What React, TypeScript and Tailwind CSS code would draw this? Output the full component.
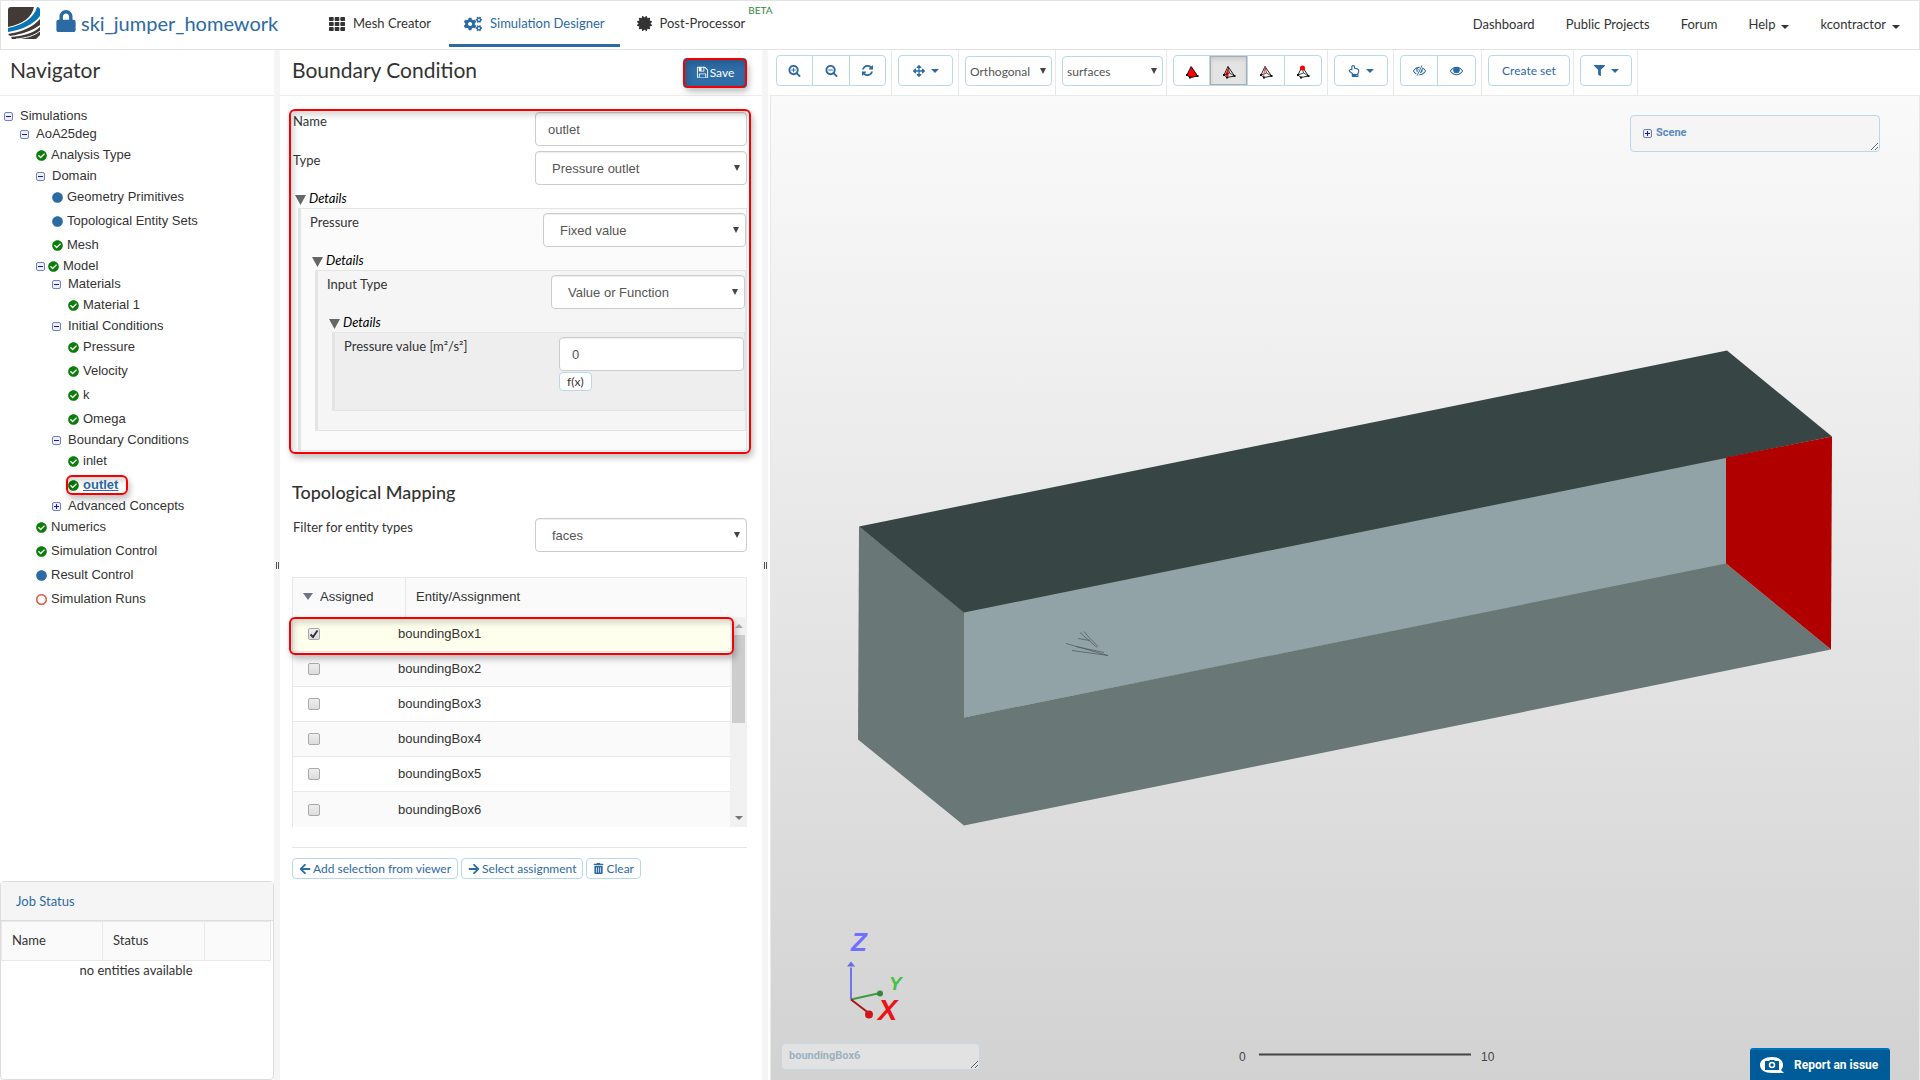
import { useState } from 'react';
import type { ReactNode } from 'react';
import clsx from 'clsx';
import {
  FaArrowLeft,
  FaArrowRight,
  FaArrowsAlt,
  FaCertificate,
  FaCheckCircle,
  FaCircle,
  FaCogs,
  FaFilter,
  FaLock,
  FaRegCircle,
  FaRegHandPointUp,
  FaTh,
  FaTrashAlt,
} from 'react-icons/fa';

type Status = 'ok' | 'info' | 'open';

interface TreeNode {
  label: string;
  level: number;
  toggle?: 'minus' | 'plus';
  status?: Status;
  selected?: boolean;
}

const TREE: TreeNode[] = [
  { label: 'Simulations', level: 0, toggle: 'minus' },
  { label: 'AoA25deg', level: 1, toggle: 'minus' },
  { label: 'Analysis Type', level: 2, status: 'ok' },
  { label: 'Domain', level: 2, toggle: 'minus' },
  { label: 'Geometry Primitives', level: 3, status: 'info' },
  { label: 'Topological Entity Sets', level: 3, status: 'info' },
  { label: 'Mesh', level: 3, status: 'ok' },
  { label: 'Model', level: 2, toggle: 'minus', status: 'ok' },
  { label: 'Materials', level: 3, toggle: 'minus' },
  { label: 'Material 1', level: 4, status: 'ok' },
  { label: 'Initial Conditions', level: 3, toggle: 'minus' },
  { label: 'Pressure', level: 4, status: 'ok' },
  { label: 'Velocity', level: 4, status: 'ok' },
  { label: 'k', level: 4, status: 'ok' },
  { label: 'Omega', level: 4, status: 'ok' },
  { label: 'Boundary Conditions', level: 3, toggle: 'minus' },
  { label: 'inlet', level: 4, status: 'ok' },
  { label: 'outlet', level: 4, status: 'ok', selected: true },
  { label: 'Advanced Concepts', level: 3, toggle: 'plus' },
  { label: 'Numerics', level: 2, status: 'ok' },
  { label: 'Simulation Control', level: 2, status: 'ok' },
  { label: 'Result Control', level: 2, status: 'info' },
  { label: 'Simulation Runs', level: 2, status: 'open' },
];

const INDENT = ['pl-1', 'pl-5', 'pl-9', 'pl-[52px]', 'pl-[68px]'];

const ENTITIES = ['boundingBox1', 'boundingBox2', 'boundingBox3', 'boundingBox4', 'boundingBox5', 'boundingBox6'];

const ICONS = {
  zoomIn:
    'M1088 800v64q0 13-9.5 22.5t-22.5 9.5h-224v224q0 13-9.5 22.5t-22.5 9.5h-64q-13 0-22.5-9.5t-9.5-22.5v-224h-224q-13 0-22.5-9.5t-9.5-22.5v-64q0-13 9.5-22.5t22.5-9.5h224v-224q0-13 9.5-22.5t22.5-9.5h64q13 0 22.5 9.5t9.5 22.5v224h224q13 0 22.5 9.5t9.5 22.5zm128 32q0-185-131.5-316.5t-316.5-131.5-316.5 131.5-131.5 316.5 131.5 316.5 316.5 131.5 316.5-131.5 131.5-316.5zm512 832q0 53-37.5 90.5t-90.5 37.5q-54 0-90-38l-343-342q-179 124-399 124-143 0-273.5-55.5t-225-150-150-225-55.5-273.5 55.5-273.5 150-225 225-150 273.5-55.5 273.5 55.5 225 150 150 225 55.5 273.5q0 220-124 399l343 343q37 37 37 90z',
  zoomOut:
    'M1088 800v64q0 13-9.5 22.5t-22.5 9.5h-576q-13 0-22.5-9.5t-9.5-22.5v-64q0-13 9.5-22.5t22.5-9.5h576q13 0 22.5 9.5t9.5 22.5zm128 32q0-185-131.5-316.5t-316.5-131.5-316.5 131.5-131.5 316.5 131.5 316.5 316.5 131.5 316.5-131.5 131.5-316.5zm512 832q0 53-37.5 90.5t-90.5 37.5q-54 0-90-38l-343-342q-179 124-399 124-143 0-273.5-55.5t-225-150-150-225-55.5-273.5 55.5-273.5 150-225 225-150 273.5-55.5 273.5 55.5 225 150 150 225 55.5 273.5q0 220-124 399l343 343q37 37 37 90z',
  refresh:
    'M1639 1056q0 5-1 7-64 268-268 434.5t-478 166.5q-146 0-282.5-55t-243.5-157l-129 129q-19 19-45 19t-45-19-19-45v-448q0-26 19-45t45-19h448q26 0 45 19t19 45-19 45l-137 137q71 66 161 102t187 36q134 0 250-65t186-179q11-17 53-117 8-23 30-23h192q13 0 22.5 9.5t9.5 22.5zm25-800v448q0 26-19 45t-45 19h-448q-26 0-45-19t-19-45 19-45l138-138q-148-137-349-137-134 0-250 65t-186 179q-11 17-53 117-8 23-30 23h-199q-13 0-22.5-9.5t-9.5-22.5v-7q65-268 270-434.5t480-166.5q146 0 284 55.5t245 156.5l130-129q19-19 45-19t45 19 19 45z',
  eye:
    'M1664 960q-152-236-381-353 61 104 61 225 0 185-131.5 316.5t-316.5 131.5-316.5-131.5-131.5-316.5q0-121 61-225-229 117-381 353 133 205 333.5 326.5t434.5 121.5 434.5-121.5 333.5-326.5zm-720-384q0-20-14-34t-34-14q-125 0-214.5 89.5t-89.5 214.5q0 20 14 34t34 14 34-14 14-34q0-86 61-147t147-61q20 0 34-14t14-34zm848 384q0 34-20 69-140 230-376.5 368.5t-499.5 138.5-499.5-139-376.5-368q-20-35-20-69t20-69q140-229 376.5-368t499.5-139 499.5 139 376.5 368q20 35 20 69z',
  save:
    'M512 1536h768v-384h-768v384zm896 0h128v-896q0-14-10-38.5t-20-34.5l-281-281q-10-10-34-20t-39-10v416q0 40-28 68t-68 28h-576q-40 0-68-28t-28-68v-416h-128v1280h128v-416q0-40 28-68t68-28h832q40 0 68 28t28 68v416zm-384-928v-320q0-13-9.5-22.5t-22.5-9.5h-192q-13 0-22.5 9.5t-9.5 22.5v320q0 13 9.5 22.5t22.5 9.5h192q13 0 22.5-9.5t9.5-22.5zm640 32v896q0 40-28 68t-68 28h-1344q-40 0-68-28t-28-68v-1344q0-40 28-68t68-28h928q40 0 88 20t76 48l280 280q28 28 48 76t20 88z',
};

function Glyph({ path, className, children }: { path: string; className?: string; children?: ReactNode }) {
  return (
    <svg viewBox="0 0 1792 1792" fill="currentColor" className={clsx('size-[13px]', className)} aria-hidden="true">
      <path d={path} />
      {children}
    </svg>
  );
}

function Caret({ className }: { className?: string }) {
  return (
    <svg viewBox="0 0 8 4" fill="currentColor" className={clsx('w-2 h-1', className)} aria-hidden="true">
      <path d="M0 0h8L4 4z" />
    </svg>
  );
}

function Logo() {
  return (
    <svg viewBox="0 0 32 32" className="size-8" aria-hidden="true">
      <clipPath id="logo-clip">
        <rect width="32" height="32" rx="3" />
      </clipPath>
      <g clipPath="url(#logo-clip)">
        <rect width="32" height="32" fill="#fff" />
        <path d="M0 0h26C24 10 15 17 0 20z" fill="#413a36" />
        <path d="M29 0h3v9C26 17 14 23 0 25v-4C15 18 26 11 29 0z" fill="#0b74b5" />
        <path d="M32 12v6C24 24 14 27 2 29L0 27C14 25 25 20 32 12z" fill="#413a36" />
        <path d="M32 20v8l-4 4H4l-1-2C14 29 24 27 32 20z" fill="#413a36" />
        <path d="M8 32c10-1 18-3 24-8" fill="none" stroke="#fff" strokeWidth="1" />
      </g>
    </svg>
  );
}

/* Red frame with a soft shadow, laid over the area it marks. */
function Highlight({ className }: { className?: string }) {
  return (
    <span
      className={clsx(
        'absolute pointer-events-none rounded-md border-2 border-[#f50000] shadow-[2px_4px_6px_rgba(0,0,0,0.25),inset_3px_4px_6px_rgba(0,0,0,0.16)]',
        className
      )}
    />
  );
}

function Header() {
  return (
    <header className="flex h-[50px] shrink-0 items-stretch border border-[#e3e3e3] text-[13px] text-[#333]">
      <div className="flex items-center pl-[7px] pb-1">
        <Logo />
        <FaLock className="mb-1 ml-[15px] size-[22px] text-[#2c6aa3]" />
        <h1 className="ml-1 w-[248px] text-xl text-[#2c6aa3]">ski_jumper_homework</h1>
      </div>
      <nav className="flex">
        <a href="#mesh" className="flex items-center gap-2 pb-[3px] pr-[18px]">
          <FaTh className="size-4" />
          Mesh Creator
        </a>
        <a
          href="#designer"
          className="mb-[2px] flex items-center gap-2 border-b-3 border-[#2c6aa3] px-[15px] pt-0.5 text-[#2c6aa3]"
        >
          <FaCogs className="size-[18px]" />
          Simulation Designer
        </a>
        <a href="#post" className="flex items-center gap-2 pb-[3px] pl-[17px]">
          <FaCertificate className="size-[15px]" />
          Post-Processor
        </a>
        <sup className="top-0 ml-[3px] pt-1 text-[10px] leading-[10px] text-[#2f8a3c]">BETA</sup>
      </nav>
      <nav className="ml-auto flex items-center gap-[31px] pr-[19px] pb-px">
        <a href="#dashboard">Dashboard</a>
        <a href="#projects">Public Projects</a>
        <a href="#forum">Forum</a>
        <button type="button" className="flex items-center gap-1.5">
          Help
          <Caret className="mt-1" />
        </button>
        <button type="button" className="flex items-center gap-1.5">
          kcontractor
          <Caret className="mt-1" />
        </button>
      </nav>
    </header>
  );
}

function Toggle({ kind }: { kind: 'minus' | 'plus' }) {
  return (
    <svg viewBox="0 0 9 9" className="size-[9px] shrink-0" aria-hidden="true">
      <rect x="0.5" y="0.5" width="8" height="8" rx="1.5" fill="#eef0fa" stroke="#6f7fc4" />
      <path d={kind === 'plus' ? 'M2 4.5h5M4.5 2v5' : 'M2 4.5h5'} stroke="#1414d2" />
    </svg>
  );
}

function StatusIcon({ status }: { status: Status }) {
  if (status === 'ok') return <FaCheckCircle className="size-[11px] shrink-0 text-[#0a7d0a]" />;
  if (status === 'info') return <FaCircle className="size-[11px] shrink-0 text-[#2c6aa3]" />;
  return <FaRegCircle className="size-[11px] shrink-0 stroke-[#dd4b2f] stroke-[20] text-[#dd4b2f]" />;
}

function TreeRow({ node }: { node: TreeNode }) {
  return (
    <li className={clsx('flex items-center', INDENT[node.level], node.toggle ? 'h-[18px]' : 'h-6')}>
      {node.toggle && <Toggle kind={node.toggle} />}
      <a
        href="#node"
        className={clsx(
          'relative flex items-center gap-1',
          node.toggle && (node.status ? 'ml-[3px]' : 'ml-[7px]'),
          node.selected && 'font-bold text-[#2c6aa3] underline'
        )}
      >
        {node.status && <StatusIcon status={node.status} />}
        {node.label}
        {node.selected && <Highlight className="-top-0.5 -right-2.5 -bottom-0.5 -left-0.5" />}
      </a>
    </li>
  );
}

function JobStatus() {
  return (
    <section className="h-[199px] shrink-0 rounded border border-[#ddd] text-[13px]">
      <h2 className="flex h-[39px] items-center border-b border-[#ddd] bg-[#f5f5f5] px-[15px] pt-0.5 text-[#2c6aa3]">
        Job Status
      </h2>
      <table className="w-[270px] table-fixed border-collapse text-left">
        <thead>
          <tr className="h-[39px] bg-[#fafafa]">
            <th className="w-[101px] border border-[#e8e8e8] px-2.5 font-normal">Name</th>
            <th className="w-[102px] border border-[#e8e8e8] px-2.5 font-normal">Status</th>
            <th className="border border-[#e8e8e8]" />
          </tr>
        </thead>
        <tbody>
          <tr>
            <td colSpan={3} className="text-center leading-[18px]">
              no entities available
            </td>
          </tr>
        </tbody>
      </table>
    </section>
  );
}

function Navigator() {
  return (
    <aside className="flex w-[274px] shrink-0 flex-col">
      <h2 className="flex h-[46px] shrink-0 items-center border-b border-[#ececec] pb-1.5 pl-2.5 text-[21px]">
        Navigator
      </h2>
      <ul className="min-h-0 flex-1 overflow-hidden pt-[11px] font-['Liberation_Sans',Arial,sans-serif] text-[13px] leading-4">
        {TREE.map((node) => (
          <TreeRow key={node.label} node={node} />
        ))}
      </ul>
      <JobStatus />
    </aside>
  );
}

function Splitter() {
  return (
    <div className="flex w-1.5 shrink-0 items-center justify-center bg-[#f5f5f5]">
      <span className="h-[7px] w-[3px] border-x border-[#555]" />
    </div>
  );
}

function SelectBox({ id, value, className }: { id: string; value: string; className?: string }) {
  return (
    <div className={clsx('relative', className)}>
      <select
        id={id}
        className="h-[34px] w-full appearance-none rounded border border-[#ccc] bg-white px-4 pt-px font-['Liberation_Sans',Arial,sans-serif] text-[13px] text-[#555] shadow-[inset_0_1px_1px_rgba(0,0,0,0.07)]"
      >
        <option>{value}</option>
      </select>
      <svg viewBox="0 0 6 6" className="absolute top-[14px] right-[7px] size-1.5 pointer-events-none" aria-hidden="true">
        <path d="M0 0h6L3 6z" fill="#444" />
      </svg>
    </div>
  );
}

function Field({ id, label, children }: { id: string; label: string; children: ReactNode }) {
  return (
    <div className="flex items-start">
      <label htmlFor={id} className="w-[calc(50%+15px)] shrink-0 leading-[18px]">
        {label}
      </label>
      <div className="flex-1">{children}</div>
    </div>
  );
}

function TextBox({ id, initial }: { id: string; initial: string }) {
  const [value, setValue] = useState(initial);
  return (
    <input
      id={id}
      type="text"
      value={value}
      onChange={(e) => setValue(e.target.value)}
      className="block h-[34px] w-full rounded border border-[#ccc] bg-white px-3 font-['Liberation_Sans',Arial,sans-serif] text-[13px] text-[#555] shadow-[inset_0_1px_1px_rgba(0,0,0,0.07)]"
    />
  );
}

/* A "Details" disclosure; nested ones get a slightly darker fill. */
function Details({ fill, children }: { fill: string; children: ReactNode }) {
  return (
    <details open>
      <summary className="flex h-[23px] list-none items-center gap-[3px] pt-1 pl-0.5 text-black italic">
        <svg viewBox="0 0 11 10" className="mt-0.5 w-[11px] h-2.5" aria-hidden="true">
          <path d="M0 0h11L5.5 10z" fill="#666" />
        </svg>
        Details
      </summary>
      <div className={clsx('ml-[5px] border border-l-3 border-[#e4e4e4] pt-1 pb-[19px] pl-[9px]', fill)}>{children}</div>
    </details>
  );
}

function ConditionForm() {
  return (
    <section className="relative p-[3px]">
      <Field id="name" label="Name">
        <TextBox id="name" initial="outlet" />
      </Field>
      <div className="mt-[5px]">
        <Field id="type" label="Type">
          <SelectBox id="type" value="Pressure outlet" />
        </Field>
      </div>
      <Details fill="bg-[#fbfbfb]">
        <Field id="pressure" label="Pressure">
          <SelectBox id="pressure" value="Fixed value" />
        </Field>
        <Details fill="bg-[#f5f5f5]">
          <Field id="input-type" label="Input Type">
            <SelectBox id="input-type" value="Value or Function" />
          </Field>
          <Details fill="bg-[#eee]">
            <Field id="pressure-value" label="Pressure value [m²/s²]">
              <TextBox id="pressure-value" initial="0" />
              <button
                type="button"
                className="mt-px block h-[19px] rounded border border-[#b9d9e8] bg-white px-[7px] text-xs leading-4"
              >
                f(x)
              </button>
            </Field>
          </Details>
        </Details>
      </Details>
      <Highlight className="-inset-x-px inset-y-0" />
    </section>
  );
}

function EntityTable() {
  const [assigned, setAssigned] = useState<string[]>(['boundingBox1']);

  const toggle = (name: string) =>
    setAssigned((list) => (list.includes(name) ? list.filter((n) => n !== name) : [...list, name]));

  return (
    <div className="relative mr-[3px] ml-[2px] font-['Liberation_Sans',Arial,sans-serif] text-[13px]">
      <table className="w-full border-separate border-spacing-0 border-l border-[#e8e8e8] text-left">
        <thead>
          <tr className="h-10 bg-[#fafafa]">
            <th className="w-[113px] border-t border-r border-[#e8e8e8] pb-0.5 pl-2.5 font-normal">
              <span className="flex items-center gap-[7px]">
                <svg viewBox="0 0 10 7" className="w-2.5 h-[7px]" aria-hidden="true">
                  <path d="M0 0h10L5 7z" fill="#6b7787" />
                </svg>
                Assigned
              </span>
            </th>
            <th className="border-t border-r border-[#e8e8e8] pb-0.5 pl-2.5 font-normal">Entity/Assignment</th>
          </tr>
        </thead>
        <tbody>
          {ENTITIES.map((name, index) => (
            <tr
              key={name}
              className={clsx('h-[35px]', index === 0 ? 'bg-[#ffffee]' : index % 2 ? 'bg-[#fafafa]' : 'bg-white')}
            >
              <td className={clsx('pl-[15px]', index < 5 && 'border-b border-[#e8e8e8]')}>
                <span className="relative block size-3">
                  <input
                    id={name}
                    type="checkbox"
                    checked={assigned.includes(name)}
                    onChange={() => toggle(name)}
                    className="peer block size-3 appearance-none rounded-[2px] border border-[#aaa] bg-linear-to-b from-[#eee] to-[#dcdcdc]"
                  />
                  <svg
                    viewBox="0 0 12 12"
                    className="absolute inset-0 hidden size-3 pointer-events-none peer-checked:block"
                    aria-hidden="true"
                  >
                    <path d="M2.5 6.5L5 9l4.500-6.500" fill="none" stroke="#333" strokeWidth="2" />
                  </svg>
                </span>
              </td>
              <td className={clsx(index < 5 && 'border-b border-[#e8e8e8]')}>
                <label htmlFor={name} className="-ml-2">
                  {name}
                </label>
              </td>
            </tr>
          ))}
        </tbody>
      </table>
      {/* list scrollbar */}
      <div className="absolute top-10 right-0 bottom-0 flex w-[17px] flex-col items-center bg-[#f1f1f1]">
        <Caret className="my-[7px] rotate-180 text-[#aaa]" />
        <span className="h-[88px] w-[13px] bg-[#cdcdcd]" />
        <Caret className="mt-auto mb-[7px] text-[#777]" />
      </div>
      <Highlight className="top-10 right-[13px] -left-[3px] h-[38px]" />
    </div>
  );
}

function SmallButton({ children }: { children: ReactNode }) {
  return (
    <button
      type="button"
      className="flex h-[21px] items-center gap-0.5 rounded border border-[#b9d9e8] bg-white px-1.5 text-xs text-[#2c6aa3]"
    >
      {children}
    </button>
  );
}

function ConditionPanel() {
  return (
    <main className="flex w-[482px] shrink-0 flex-col text-[13px]">
      <div className="flex h-[46px] shrink-0 items-center justify-between border-b border-[#ececec] pr-[15px] pl-3">
        <h2 className="pb-1.5 text-[21px]">Boundary Condition</h2>
        <button
          type="button"
          className="relative flex h-[30px] w-16 items-center justify-center gap-px rounded bg-[#2e6da8] text-xs text-white"
        >
          <Glyph path={ICONS.save} className="size-3" />
          Save
          <Highlight className="inset-0" />
        </button>
      </div>
      <div className="pt-[13px] pr-3 pl-2.5">
        <ConditionForm />
        <h3 className="mt-[26px] px-[2px] text-lg leading-6 font-medium">Topological Mapping</h3>
        <div className="mt-3.5 px-[3px]">
          <Field id="filter" label="Filter for entity types">
            <SelectBox id="filter" value="faces" />
          </Field>
        </div>
        <div className="mt-[25px]">
          <EntityTable />
        </div>
        <div className="mr-[3px] ml-[2px] mt-5 flex gap-[3px] border-t border-[#e5e5e5] pt-2.5">
          <SmallButton>
            <FaArrowLeft className="size-3" />
            Add selection from viewer
          </SmallButton>
          <SmallButton>
            <FaArrowRight className="size-3" />
            Select assignment
          </SmallButton>
          <SmallButton>
            <FaTrashAlt className="size-[11px]" />
            Clear
          </SmallButton>
        </div>
      </div>
    </main>
  );
}

/* Tetrahedron glyph for the picking modes: volume, face, edge, vertex. */
function Tetra({ mode }: { mode: 'volume' | 'face' | 'edge' | 'vertex' }) {
  return (
    <svg viewBox="0 0 14 14" className="mt-0.5 size-[14px]" aria-hidden="true">
      <g fill="none" stroke="#222" strokeWidth="1" strokeLinejoin="round">
        {mode === 'volume' && <path d="M6.500 2L2 10 5.500 12.500 12.500 11z" fill="#f00" stroke="#f00" />}
        <path d="M6 1.500L2 10 5 12.500 12.500 11z" />
        {mode === 'face' && <path d="M6.500 2L3 10 6.500 12z" fill="#f00" stroke="none" />}
        {mode !== 'volume' && <path d="M2 10L7.500 8 12.500 11M6 1.500L7.500 8" strokeWidth="0.800" />}
        {mode === 'edge' && <path d="M6 2L4.500 12" stroke="#f44" />}
      </g>
      <g fill="#111">
        <rect x="1" y="9" width="2" height="2" />
        <rect x="4" y="11.500" width="2" height="2" />
        <rect x="11.500" y="10" width="2" height="2" />
      </g>
      {mode === 'vertex' && <circle cx="6.500" cy="3" r="2.500" fill="#f00" />}
    </svg>
  );
}

function ToolCell({ tight, children }: { tight?: boolean; children: ReactNode }) {
  return (
    <div className={clsx('flex items-start border-r border-[#e8e8e8] pt-[5px] pl-1.5', tight ? 'pr-[3px]' : 'pr-[5px]')}>
      {children}
    </div>
  );
}

function ToolGroup({ children }: { children: ReactNode }) {
  return (
    <div className="flex h-[31px] divide-x divide-[#b9d9e8] overflow-hidden rounded border border-[#b9d9e8] bg-white text-[#2c6aa3]">
      {children}
    </div>
  );
}

function Tool({ label, className, children }: { label: string; className?: string; children: ReactNode }) {
  return (
    <button type="button" aria-label={label} className={clsx('flex items-center justify-center gap-1.5', className)}>
      {children}
    </button>
  );
}

function ToolSelect({ label, value, className }: { label: string; value: string; className?: string }) {
  return (
    <div className={clsx('relative mt-px', className)}>
      <select
        aria-label={label}
        className="h-[30px] w-full appearance-none rounded border border-[#b9d9e8] bg-white px-1 pt-0.5 text-xs text-[#555]"
      >
        <option>{value}</option>
      </select>
      <svg viewBox="0 0 6 6" className="absolute top-3 right-1.5 size-1.5 pointer-events-none" aria-hidden="true">
        <path d="M0 0h6L3 6z" fill="#444" />
      </svg>
    </div>
  );
}

function Toolbar() {
  return (
    <div className="flex h-[46px] shrink-0 border-b border-[#e8e8e8]">
      <ToolCell>
        <ToolGroup>
          <Tool label="Zoom in" className="w-9">
            <Glyph path={ICONS.zoomIn} />
          </Tool>
          <Tool label="Zoom out" className="w-[37px]">
            <Glyph path={ICONS.zoomOut} />
          </Tool>
          <Tool label="Refresh" className="w-[35px]">
            <Glyph path={ICONS.refresh} />
          </Tool>
        </ToolGroup>
      </ToolCell>
      <ToolCell>
        <ToolGroup>
          <Tool label="Move" className="w-[53px]">
            <FaArrowsAlt className="size-3" />
            <Caret />
          </Tool>
        </ToolGroup>
      </ToolCell>
      <ToolCell tight>
        <ToolSelect label="Projection" value="Orthogonal" className="w-[87px]" />
      </ToolCell>
      <ToolCell tight>
        <ToolSelect label="Render mode" value="surfaces" className="w-[101px]" />
      </ToolCell>
      <ToolCell>
        <ToolGroup>
          <Tool label="Pick volumes" className="w-9">
            <Tetra mode="volume" />
          </Tool>
          <Tool
            label="Pick faces"
            className="w-[38px] bg-[#e4e4e4] shadow-[inset_0_0_0_1px_#adadad,inset_0_3px_5px_rgba(0,0,0,0.12)]"
          >
            <Tetra mode="face" />
          </Tool>
          <Tool label="Pick edges" className="w-[37px]">
            <Tetra mode="edge" />
          </Tool>
          <Tool label="Pick vertices" className="w-9">
            <Tetra mode="vertex" />
          </Tool>
        </ToolGroup>
      </ToolCell>
      <ToolCell>
        <ToolGroup>
          <Tool label="Select" className="w-[52px]">
            <FaRegHandPointUp className="size-3" />
            <Caret />
          </Tool>
        </ToolGroup>
      </ToolCell>
      <ToolCell>
        <ToolGroup>
          <Tool label="Hide" className="w-[37px]">
            <Glyph path={ICONS.eye}>
              <path d="M1250 200L560 1600" stroke="#fff" strokeWidth="360" />
              <path d="M1250 200L560 1600" stroke="currentColor" strokeWidth="130" />
            </Glyph>
          </Tool>
          <Tool label="Show" className="w-[37px]">
            <Glyph path={ICONS.eye}>
              <circle cx="896" cy="850" r="400" />
            </Glyph>
          </Tool>
        </ToolGroup>
      </ToolCell>
      <ToolCell tight>
        <ToolGroup>
          <button type="button" className="w-20 text-xs">
            Create set
          </button>
        </ToolGroup>
      </ToolCell>
      <ToolCell>
        <ToolGroup>
          <Tool label="Filter" className="w-[50px]">
            <FaFilter className="size-[11px]" />
            <Caret />
          </Tool>
        </ToolGroup>
      </ToolCell>
    </div>
  );
}

function Scene3D() {
  return (
    <svg
      viewBox="771 96 1148 983"
      className="absolute inset-0 h-full w-full font-['Liberation_Sans',Arial,sans-serif]"
      role="img"
      aria-label="Flow domain"
    >
      <path d="M964 610L1726 456V564L964 717z" fill="#91a3a7" />
      <path d="M964 717L1726 563 1831 649 964 825z" fill="#697776" />
      <path d="M859 526L964 611V825L858 739z" fill="#697776" />
      <path d="M859 526L1727 350 1832 436 964 612z" fill="#374545" />
      <path d="M1726 457L1832 436 1831 649 1726 563z" fill="#b00000" />

      {/* ski jumper */}
      <g fill="none" stroke="#4a5658" strokeWidth="0.700">
        <path d="M1066 643L1108 655M1072 650L1108 655M1076 646L1104 652M1080 632L1097 647M1084 631L1090 638 1098 646M1078 638L1090 640" />
      </g>

      {/* orientation axes */}
      <path d="M851 999V967" stroke="#7373e8" strokeWidth="2" />
      <path d="M847 966l4-5 4 5z" fill="#6868e0" />
      <path d="M851 999L878 993" stroke="#3d9a42" strokeWidth="2" />
      <circle cx="880" cy="993" r="3" fill="#36873a" />
      <path d="M851 999L868 1012" stroke="#a81518" strokeWidth="2" />
      <circle cx="869" cy="1014" r="4" fill="#d01519" />
      <g fontStyle="italic" fontWeight="700">
        <text x="851" y="950" fontSize="26" fill="#7070ff">Z</text>
        <text x="889" y="989" fontSize="19" fill="#45c045">Y</text>
        <text x="878" y="1019" fontSize="29" fill="#e81518">X</text>
      </g>

      {/* scale bar */}
      <path d="M1259 1054H1471" stroke="#444" strokeWidth="2" />
      <g fontSize="12" fontWeight="400" fill="#444">
        <text x="1239" y="1060">0</text>
        <text x="1481" y="1060">10</text>
      </g>
    </svg>
  );
}

function Viewer() {
  return (
    <section className="ml-0.5 flex min-w-0 flex-1 flex-col">
      <Toolbar />
      <div className="relative flex-1 border-x border-[#e8e8e8] bg-linear-to-b from-[#fafafa] to-[#d2d2d2] font-['Roboto',sans-serif] font-bold">
        <Scene3D />
        <div className="absolute top-[19px] right-[39px] flex h-[37px] w-[250px] resize items-center gap-1 overflow-auto rounded border border-[#b9d9e8] bg-[#f5f5f5] pl-3 text-[11px] text-[#5a8ab8]">
          <Toggle kind="plus" />
          Scene
        </div>
        <div className="absolute bottom-2.5 left-2.5 flex h-[27px] w-[199px] resize items-center overflow-auto rounded border border-[#c4d8e0] bg-[#e2e2e2] pl-[7px] text-[11px] text-[#9cb2c0]">
          boundingBox6
        </div>
        <button
          type="button"
          className="absolute right-[29px] bottom-0 flex h-8 w-[140px] items-center gap-2.5 rounded-t-[3px] border-t-2 border-[#0070bb] bg-[#005c98] pl-2.5 text-xs text-white"
        >
          <svg viewBox="0 0 24 16" className="w-6 h-4" aria-hidden="true">
            <path d="M12 0c7 0 11 3 11 8 0 2-1 4-2 5l3 3h-5c-2 0-4 0-7 0C5 16 0 13 0 8s5-8 12-8z" fill="#fff" />
            <path d="M5 4h4l1-1h4l1 1h4v9H5z" fill="#005c98" />
            <circle cx="12" cy="8" r="2.500" fill="none" stroke="#fff" strokeWidth="1.500" />
          </svg>
          Report an issue
        </button>
      </div>
    </section>
  );
}

export default function App() {
  return (
    <div className="flex h-screen flex-col overflow-hidden bg-white font-['Lato',sans-serif] text-[#333]">
      <Header />
      <div className="flex min-h-0 flex-1">
        <Navigator />
        <Splitter />
        <ConditionPanel />
        <Splitter />
        <Viewer />
      </div>
    </div>
  );
}
